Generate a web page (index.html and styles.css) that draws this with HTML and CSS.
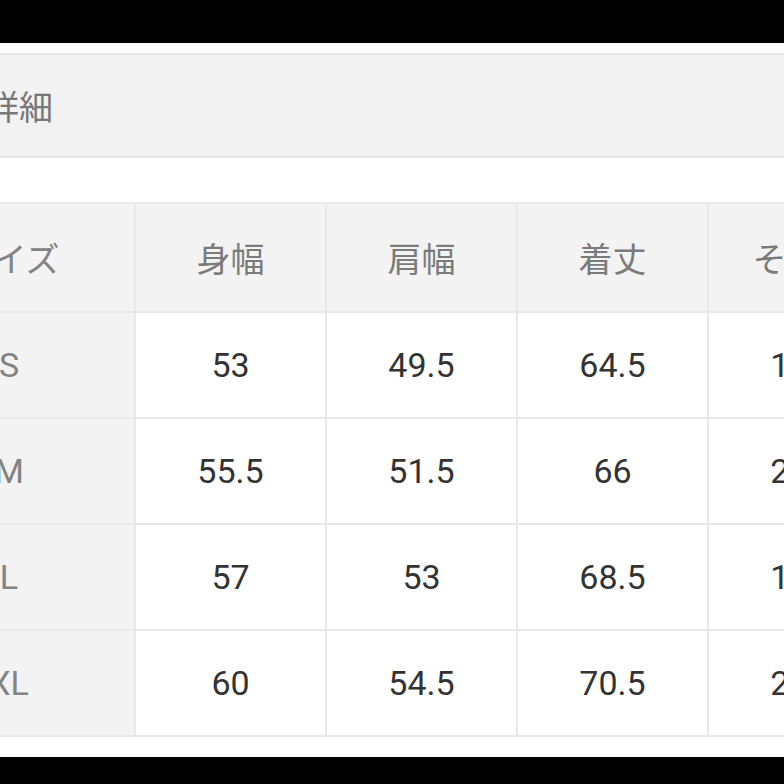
FILE: index.html
```html
<!DOCTYPE html>
<html lang="ja">
<head>
<meta charset="utf-8">
<link rel="stylesheet" href="styles.css">
</head>
<body>
<div class="page">
  <div class="bar bar-top"></div>
  <div class="section-head"><span class="section-title">詳細</span></div>
  <table class="size-table">
    <colgroup>
      <col class="c-first"><col class="c"><col class="c"><col class="c"><col class="c">
    </colgroup>
    <thead>
      <tr><th class="rowhead">サイズ</th><th>身幅</th><th>肩幅</th><th>着丈</th><th>そで丈</th></tr>
    </thead>
    <tbody>
      <tr><th class="rowhead">S</th><td>53</td><td>49.5</td><td>64.5</td><td>19.5</td></tr>
      <tr><th class="rowhead">M</th><td>55.5</td><td>51.5</td><td>66</td><td>20.5</td></tr>
      <tr><th class="rowhead">L</th><td>57</td><td>53</td><td>68.5</td><td>19.5</td></tr>
      <tr><th class="rowhead">XL</th><td>60</td><td>54.5</td><td>70.5</td><td>21.5</td></tr>
    </tbody>
  </table>
  <div class="spacer"></div>
  <div class="bar bar-bottom"></div>
</div>
</body>
</html>
```
FILE: styles.css
```css
html, body {
  margin: 0;
  padding: 0;
  background: #ffffff;
  overflow: hidden;
}
.page {
  width: 784px;
  height: 784px;
  display: flex;
  flex-direction: column;
  overflow: hidden;
  font-family: Roboto, "Noto Sans CJK JP", sans-serif;
}
.bar {
  background: #000000;
  flex: none;
}
.bar-top {
  height: 43px;
}
.bar-bottom {
  height: 27px;
}
.spacer {
  flex: 1;
}
.section-head {
  flex: none;
  margin: 10px -20px 0 -20px;
  height: 101px;
  background: #f2f2f2;
  border-top: 2px solid #e6e6e6;
  border-bottom: 2px solid #e6e6e6;
  display: flex;
  align-items: center;
}
.section-title {
  margin-left: 5px;
  font-family: "Noto Sans CJK JP", sans-serif;
  font-size: 34px;
  color: #777777;
  line-height: 1;
}
.size-table {
  flex: none;
  margin-top: 44px;
  margin-left: -118px;
  border-collapse: collapse;
  table-layout: fixed;
  width: 1016px;
  border-top: 2px solid #ebebeb;
}
.c-first {
  width: 252px;
}
.c {
  width: 191px;
}
.size-table th,
.size-table td {
  height: 104px;
  padding: 0;
  text-align: center;
  vertical-align: middle;
  border: 2px solid #e8e8e8;
  font-size: 34px;
  font-weight: 400;
  line-height: 1;
}
.size-table thead th {
  height: 107px;
  background: #f3f3f3;
  color: #7b7b7b;
  font-family: "Noto Sans CJK JP", sans-serif;
}
.size-table .rowhead {
  background: #f3f3f3;
  color: #838383;
}
.size-table td {
  background: #ffffff;
  color: #333333;
  font-family: Roboto, sans-serif;
}
```
